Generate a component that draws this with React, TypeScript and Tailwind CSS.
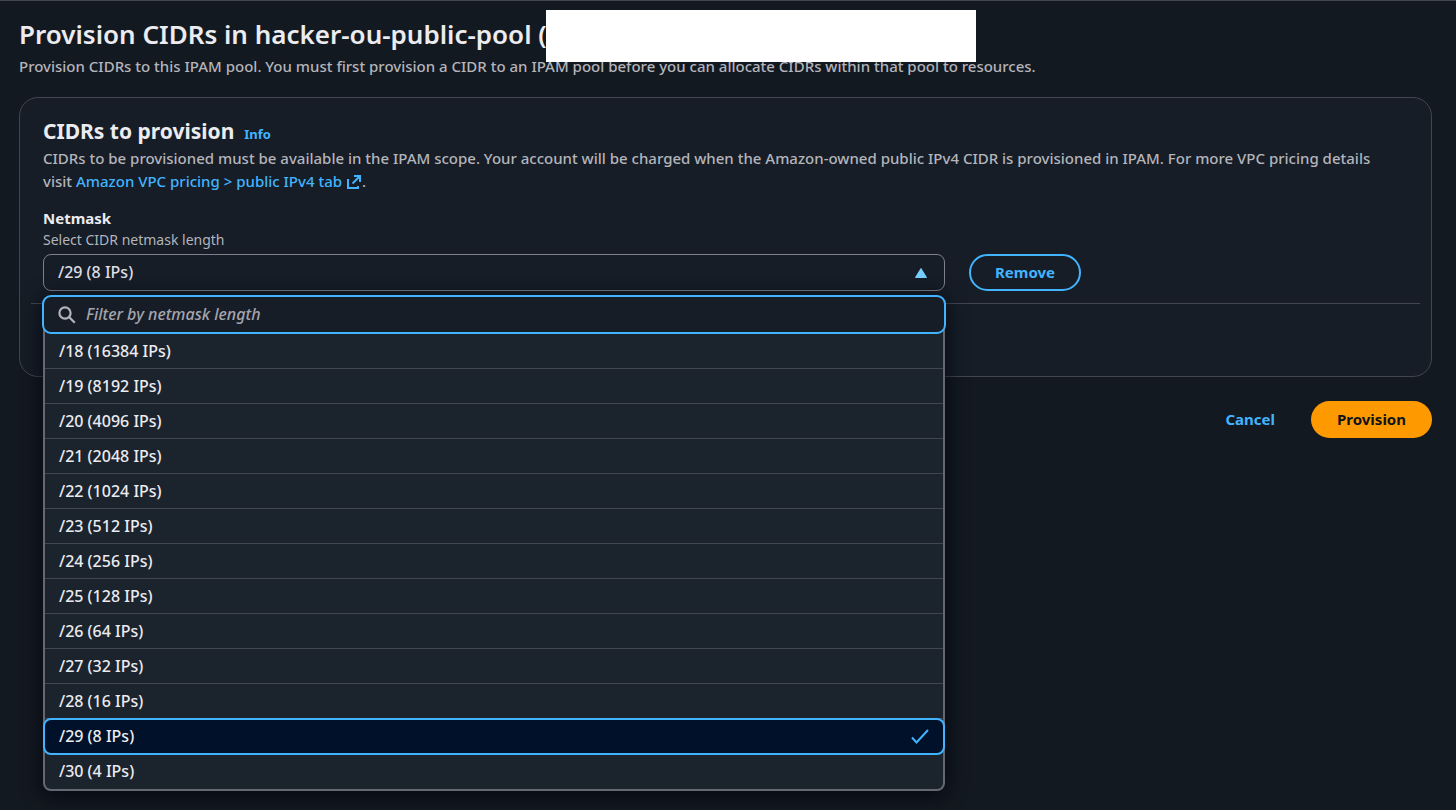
import React, { useState } from 'react';

interface NetmaskOption {
  value: string;
  label: string;
}

const NETMASKS: NetmaskOption[] = [
  { value: '18', label: '/18 (16384 IPs)' },
  { value: '19', label: '/19 (8192 IPs)' },
  { value: '20', label: '/20 (4096 IPs)' },
  { value: '21', label: '/21 (2048 IPs)' },
  { value: '22', label: '/22 (1024 IPs)' },
  { value: '23', label: '/23 (512 IPs)' },
  { value: '24', label: '/24 (256 IPs)' },
  { value: '25', label: '/25 (128 IPs)' },
  { value: '26', label: '/26 (64 IPs)' },
  { value: '27', label: '/27 (32 IPs)' },
  { value: '28', label: '/28 (16 IPs)' },
  { value: '29', label: '/29 (8 IPs)' },
  { value: '30', label: '/30 (4 IPs)' },
];

function ExternalIcon() {
  return (
    <svg viewBox="0 0 16 16" className="inline-block w-4 h-4 align-[-3px]" fill="none" stroke="currentColor" strokeWidth="2" aria-hidden="true">
      <path d="M8 2h6v6M14 2 6.5 9.5M2 5v9h10v-2" />
    </svg>
  );
}

function SearchIcon() {
  return (
    <svg viewBox="0 0 18 18" className="w-[18px] h-[18px] shrink-0 text-[#b4b4bb]" fill="none" stroke="currentColor" strokeWidth="2.2" aria-hidden="true">
      <circle cx="7" cy="7" r="5.6" />
      <path d="m11 11 5.8 5.8" />
    </svg>
  );
}

interface NetmaskMenuProps {
  selected: string;
  onSelect: (value: string) => void;
}

function NetmaskMenu({ selected, onSelect }: NetmaskMenuProps) {
  const [filter, setFilter] = useState('');
  const options = NETMASKS.filter((o) => o.label.includes(filter));

  return (
    <div className="absolute top-full left-0 right-0 z-10 mt-1 rounded-lg shadow-[0_4px_20px_1px_rgba(0,4,16,0.8)]">
      <label className="relative z-10 -mx-px flex items-center gap-[10px] h-[39px] px-[14px] rounded-[9px] border-2 border-[#42b4ff] bg-[#161d26]">
        <SearchIcon />
        <input
          type="text"
          aria-label="Filter by netmask length"
          placeholder="Filter by netmask length"
          value={filter}
          onChange={(e) => setFilter(e.target.value)}
          className="flex-1 min-w-0 bg-transparent outline-none text-[16px] text-[#ebebf0] placeholder:italic placeholder:text-[#a4a4ad]"
        />
      </label>
      <ul role="listbox" aria-label="Netmask" className="-mt-2 pt-2 rounded-b-lg border-2 border-t-0 border-[#656871] bg-[#1b232d] text-[16px]">
        {options.map((o) =>
          o.value === selected ? (
            <li
              key={o.value}
              role="option"
              aria-selected="true"
              className="relative -mx-[2px] -my-px flex items-center justify-between h-[37px] px-[14px] rounded-lg border-2 border-[#42b4ff] bg-[#001129] text-[#ebebf0]"
            >
              {o.label}
              <svg viewBox="0 0 18 18" className="w-[18px] h-[18px]" fill="none" stroke="#42b4ff" strokeWidth="2" aria-hidden="true">
                <path d="m1 9.5 4.5 5L17 2" />
              </svg>
            </li>
          ) : (
            <li
              key={o.value}
              role="option"
              aria-selected="false"
              onClick={() => onSelect(o.value)}
              className="flex items-center h-[35px] px-[14px] border-b border-[#424650] last:border-b-0 text-[#ebebf0] cursor-pointer"
            >
              {o.label}
            </li>
          )
        )}
      </ul>
    </div>
  );
}

export default function App() {
  const [netmask, setNetmask] = useState('29');

  return (
    <div className="min-h-screen bg-[#131920] border-t border-[#424650] pt-[15px] pl-[19px] pr-6 font-['Noto_Sans','Open_Sans',sans-serif] text-[15px] leading-[23px] font-medium text-[#b4b4bb]">
      <header className="relative">
        <h1 className="text-[26px] leading-9 font-[650] text-[#ebebf0]">Provision CIDRs in hacker-ou-public-pool (</h1>
        <p className="mt-[3px]">
          Provision CIDRs to this IPAM pool. You must first provision a CIDR to an IPAM pool before you can allocate CIDRs within that pool to resources.
        </p>
        <div className="absolute -top-1.5 left-[527px] w-[430px] h-[52px] bg-white"></div>
      </header>

      <section className="mt-[19px] px-[23px] pt-[19px] pb-[72px] rounded-[19px] border border-[#424650] bg-[#161d26]">
        <div className="mb-px flex items-baseline gap-2.5">
          <h2 className="text-[21px] leading-7 font-bold text-[#ebebf0]">CIDRs to provision</h2>
          <a href="#info" className="text-[13px] font-bold text-[#42b4ff]">Info</a>
        </div>
        <p>
          CIDRs to be provisioned must be available in the IPAM scope. Your account will be charged when the Amazon-owned public IPv4 CIDR is provisioned in IPAM. For more VPC pricing details visit&nbsp;<a href="#pricing" className="text-[#42b4ff]">Amazon VPC pricing &gt; public IPv4 tab <ExternalIcon /></a>.
        </p>

        <div className="-mx-3 mt-[14px] flex items-end border-b border-[#424650] pb-3">
          <div className="w-2/3 px-3">
            <label htmlFor="netmask" className="block font-bold text-[#ebebf0]">Netmask</label>
            <p id="netmask-hint" className="mb-1 text-[14px] leading-5 font-normal">Select CIDR netmask length</p>
            <div className="relative">
              <select
                id="netmask"
                aria-describedby="netmask-hint"
                value={netmask}
                onChange={(e) => setNetmask(e.target.value)}
                className="block w-full h-[37px] px-[14px] appearance-none rounded-lg border border-[#7d808a] bg-[#161d26] text-[16px] text-[#dedee3] outline-none"
              >
                {NETMASKS.map((o) => (
                  <option key={o.value} value={o.value}>{o.label}</option>
                ))}
              </select>
              <svg viewBox="0 0 12 10" className="absolute right-[18px] top-[14px] w-3 h-2.5 pointer-events-none" fill="#75cfff" aria-hidden="true">
                <path d="M6 .5 11.5 9.5H.5z" stroke="#75cfff" strokeLinejoin="round" />
              </svg>
              <NetmaskMenu selected={netmask} onSelect={setNetmask} />
            </div>
          </div>
          <div className="px-3">
            <button type="button" className="h-[37px] px-6 rounded-full border-2 border-[#42b4ff] font-bold text-[#42b4ff]">Remove</button>
          </div>
        </div>
      </section>

      <div className="mt-6 flex justify-end gap-[10px]">
        <button type="button" className="h-[37px] px-[26px] rounded-full font-bold text-[#42b4ff]">Cancel</button>
        <button type="button" className="h-[37px] px-[26px] rounded-full bg-[#ff9900] font-bold text-[#0f141a]">Provision</button>
      </div>
    </div>
  );
}
